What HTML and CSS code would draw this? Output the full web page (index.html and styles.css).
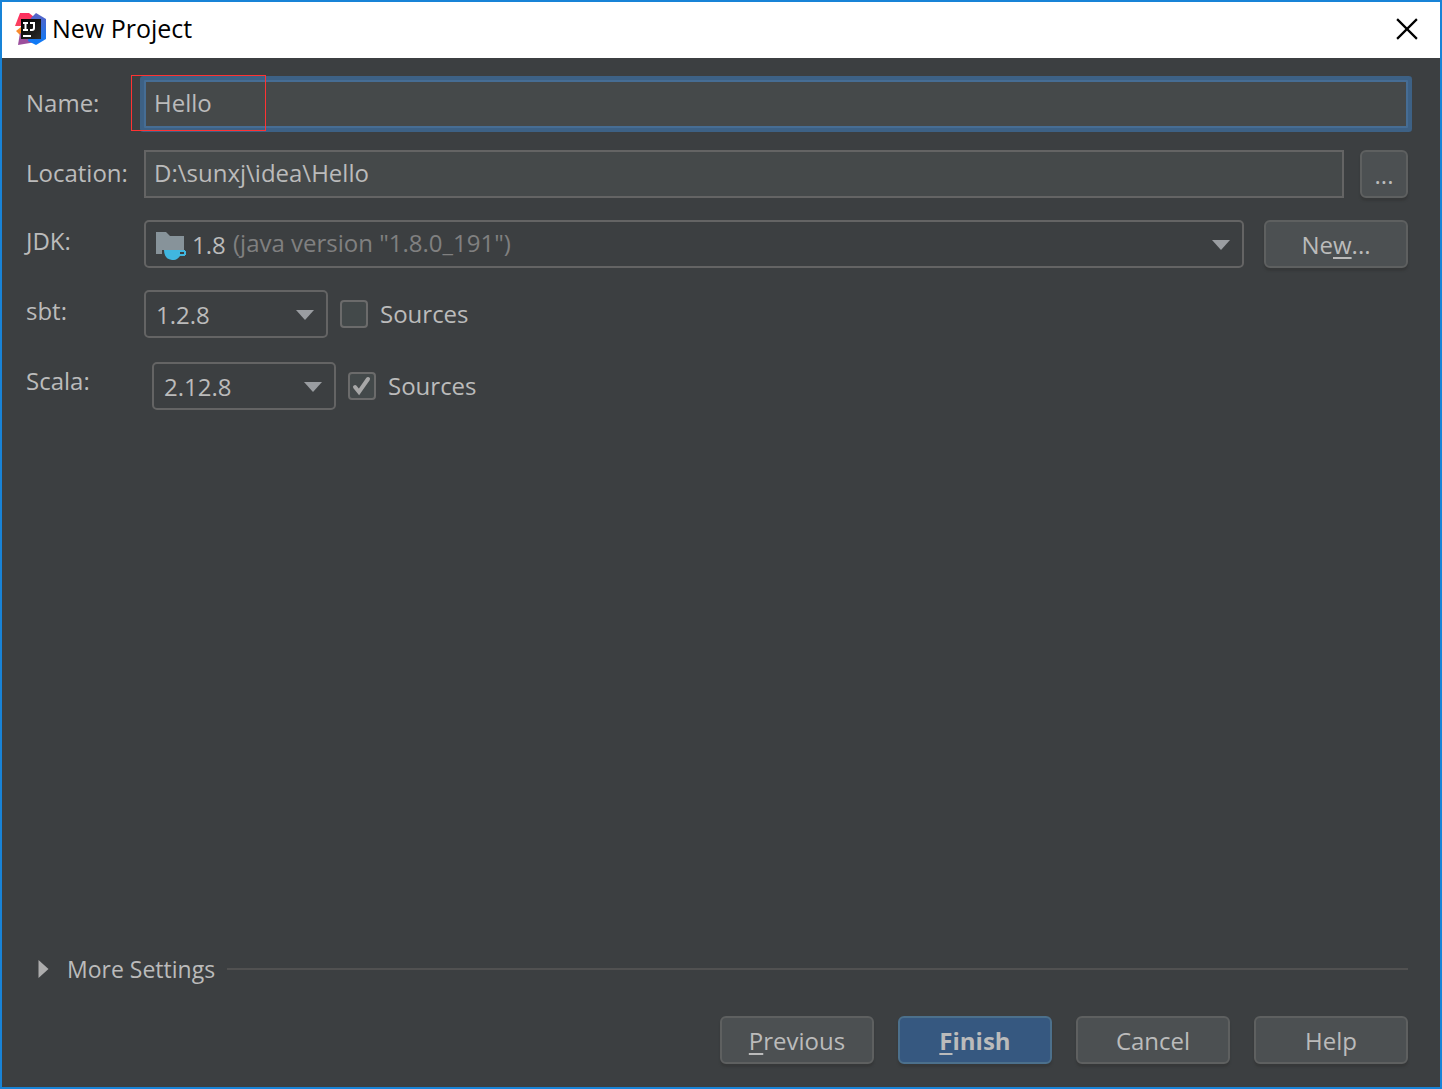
FILE: index.html
```html
<!DOCTYPE html>
<html lang="en">
<head>
    <meta charset="UTF-8">
    <meta name="viewport" content="width=device-width, initial-scale=1.0">
    <title>New Project</title>
    <link rel="stylesheet" href="styles.css">
</head>
<body>

    <header class="titlebar">
        <svg class="logo" viewBox="0 0 32 32" aria-hidden="true">
            <defs>
                <linearGradient id="blue" x1="0" y1="0" x2="0" y2="1">
                    <stop offset="0" stop-color="#5a62c4"/>
                    <stop offset="1" stop-color="#087cfa"/>
                </linearGradient>
                <linearGradient id="pink" x1="0" y1="0" x2="0" y2="1">
                    <stop offset="0" stop-color="#fe2d5f"/>
                    <stop offset="1" stop-color="#f9435f"/>
                </linearGradient>
                <linearGradient id="dark" x1="0" y1="0" x2="1" y2="1">
                    <stop offset="0" stop-color="#000"/>
                    <stop offset="1" stop-color="#2c2c2c"/>
                </linearGradient>
            </defs>
            <path fill="#f98b2c" d="M1 18l5-4v9z"/>
            <path fill="#9b4f9c" d="M5 20l16 9-18 3z"/>
            <path fill="url(#pink)" d="M5 0h9l5 4-4 9H0z"/>
            <path fill="url(#blue)" d="M21 0l10 6v20l-10 6-8-4 3-23z"/>
            <rect fill="url(#dark)" x="6" y="6" width="20" height="20"/>
            <path fill="none" stroke="#fff" stroke-width="2" d="M8 10h5M10.500 10v7M8 17h5M15 10h4v5q0 2-2 2h-2"/>
            <rect fill="#fff" x="8" y="22" width="8" height="2"/>
        </svg>
        <h1>New Project</h1>
        <button type="button" class="close" aria-label="Close">
            <svg viewBox="0 0 20 20"><path d="M1 1l18 18M19 1L1 19"/></svg>
        </button>
    </header>

    <form id="projectForm">
        <div class="fields">
            <label for="name">Name:</label>
            <div class="row name-row">
                <input type="text" id="name" class="active" name="name" value="Hello">
                <span class="mark"></span>
            </div>

            <label for="location">Location:</label>
            <div class="row">
                <input type="text" id="location" name="location" value="D:\sunxj\idea\Hello">
                <button type="button" class="browse" aria-label="Browse">...</button>
            </div>

            <label class="top" for="jdk">JDK:</label>
            <div class="row jdk-row">
                <div class="combo wide">
                    <svg class="folder" viewBox="0 0 30 28" aria-hidden="true">
                        <path fill="#87939a" d="M0 0h10l4 4h14v14H6v4H0z"/>
                        <path fill="#40b6e0" fill-rule="evenodd" d="M8 18h21v1h1v4h-1v1h-5q-3 4-6 4h-2q-8-1-8-10zM24 20v2h4v-2z"/>
                    </svg>
                    <select id="jdk" name="jdk">
                        <option>1.8</option>
                    </select>
                    <span class="version">(java version "1.8.0_191")</span>
                    <svg class="arrow" viewBox="0 0 18 10" aria-hidden="true"><path d="M0 0h18l-9 10z"/></svg>
                </div>
                <button type="button" class="new">Ne<u>w</u>...</button>
            </div>

            <label class="top" for="sbt">sbt:</label>
            <div class="row version-row">
                <div class="combo">
                    <select id="sbt" name="sbt">
                        <option>1.2.8</option>
                    </select>
                    <svg class="arrow" viewBox="0 0 18 10" aria-hidden="true"><path d="M0 0h18l-9 10z"/></svg>
                </div>
                <label class="check"><input type="checkbox" name="sbtSources"> Sources</label>
            </div>

            <label class="top" for="scala">Scala:</label>
            <div class="row version-row inset">
                <div class="combo">
                    <select id="scala" name="scala">
                        <option>2.12.8</option>
                    </select>
                    <svg class="arrow" viewBox="0 0 18 10" aria-hidden="true"><path d="M0 0h18l-9 10z"/></svg>
                </div>
                <label class="check">
                    <input type="checkbox" name="scalaSources" checked>
                    <svg class="tick" viewBox="0 0 28 28" aria-hidden="true"><path d="M7 15l4 5L20 7"/></svg>
                    Sources
                </label>
            </div>
        </div>

        <div class="more">
            <button type="button" class="toggle" aria-expanded="false">
                <svg viewBox="0 0 10 18" aria-hidden="true"><path d="M0 0l10 9-10 9z"/></svg>
                More Settings
            </button>
            <hr>
        </div>

        <div class="actions">
            <button type="button"><u>P</u>revious</button>
            <button type="submit" class="primary"><u>F</u>inish</button>
            <button type="button">Cancel</button>
            <button type="button">Help</button>
        </div>
    </form>

</body>
</html>
```
FILE: styles.css
```css
* {
    box-sizing: border-box;
}

body {
    margin: 0;
    min-height: 100vh;
    display: flex;
    flex-direction: column;
    border: 2px solid #1883d7;
    background-color: #3c3f41;
    color: #bbbbbb;
    font-family: "Open Sans", "Noto Sans", sans-serif;
    font-size: 24px;
}

input, select, button {
    font: inherit;
    color: inherit;
}

.titlebar {
    display: flex;
    align-items: center;
    gap: 5px;
    height: 56px;
    padding: 0 22px 2px 13px;
    background-color: #fff;
    color: #000;
}

.logo {
    width: 32px;
    height: 32px;
}

h1 {
    flex: 1;
    margin: 0;
    padding-bottom: 2px;
    font-size: 25px;
    font-weight: normal;
}

.titlebar .close {
    height: 22px;
    padding: 0;
    border: none;
    border-radius: 0;
    background: none;
    box-shadow: none;
}

.close svg {
    display: block;
    width: 22px;
    height: 22px;
    fill: none;
    stroke: #000;
    stroke-width: 2;
}

form {
    flex: 1;
    display: flex;
    flex-direction: column;
    padding: 22px 32px 23px 24px;
}

.fields {
    flex: 1;
    display: grid;
    grid-template-columns: 118px 1fr;
    align-content: start;
    row-gap: 22px;
    line-height: 46px;
}

label.top {
    line-height: 42px;
}

.row {
    display: flex;
    gap: 16px;
}

.name-row {
    position: relative;
}

.jdk-row {
    gap: 20px;
}

.version-row {
    gap: 12px;
}

.inset {
    padding: 2px 8px;
}

input[type="text"] {
    flex: 1;
    min-width: 0;
    height: 48px;
    padding: 0 8px 4px;
    border: 2px solid #646464;
    background-color: #45494a;
    outline: none;
}

input.active {
    border-color: #466d94;
    box-shadow: 0 0 0 4px #3d6185;
    border-radius: 1px;
}

/* red frame round the project name */
.mark {
    position: absolute;
    top: -5px;
    left: -13px;
    width: 135px;
    height: 56px;
    border: 1px solid #ff3333;
    pointer-events: none;
}

button {
    height: 48px;
    padding: 0;
    border: 2px solid #5e6060;
    border-radius: 6px;
    background-color: #4c5052;
    box-shadow: 0 3px 2px #363839;
    cursor: pointer;
}

u {
    text-decoration-thickness: 2px;
    text-underline-offset: 3px;
    text-decoration-skip-ink: none;
}

.browse {
    width: 48px;
}

.new {
    width: 144px;
}

.combo {
    display: grid;
    grid-template-columns: 1fr;
    align-items: center;
    width: 184px;
    height: 48px;
    border: 2px solid #646464;
    border-radius: 5px;
}

.combo > * {
    grid-area: 1 / 1;
    pointer-events: none;
}

.combo select {
    width: 100%;
    height: 44px;
    padding: 0 40px 0 10px;
    border: none;
    background: none;
    appearance: none;
    outline: none;
    pointer-events: auto;
}

.wide {
    flex: 1;
    width: auto;
}

.combo.wide select {
    padding-left: 46px;
    padding-bottom: 4px;
}

.folder {
    width: 30px;
    height: 28px;
    margin: 4px 0 0 10px;
}

.version {
    padding: 0 0 2px 87px;
    line-height: 42px;
    color: #808080;
}

.arrow {
    justify-self: end;
    width: 18px;
    height: 10px;
    margin: 2px 12px 0 0;
    fill: #9a9da1;
}

.check {
    position: relative;
    display: flex;
    align-items: center;
    gap: 12px;
    line-height: 48px;
}

.check input {
    width: 28px;
    height: 28px;
    margin: 0;
    border: 2px solid #6b6b6b;
    border-radius: 4px;
    background-color: #43494a;
    appearance: none;
}

.tick {
    position: absolute;
    left: 0;
    width: 28px;
    height: 28px;
    fill: none;
    stroke: #a7a7a7;
    stroke-width: 4;
    stroke-linecap: round;
}

.more {
    display: flex;
    align-items: center;
    gap: 12px;
    margin-bottom: 23px;
}

.more .toggle {
    display: flex;
    align-items: center;
    gap: 18px;
    padding: 0 0 0 12px;
    border: none;
    background: none;
    box-shadow: none;
    font-size: 23px;
}

.toggle svg {
    width: 11px;
    height: 18px;
    fill: #adadad;
}

hr {
    flex: 1;
    margin: 0;
    border: none;
    border-top: 2px solid #515151;
}

.actions {
    display: flex;
    justify-content: flex-end;
    gap: 24px;
}

.actions button {
    width: 154px;
}

.actions .primary {
    border-color: #4c708c;
    background-color: #365880;
    font-weight: bold;
}
```
